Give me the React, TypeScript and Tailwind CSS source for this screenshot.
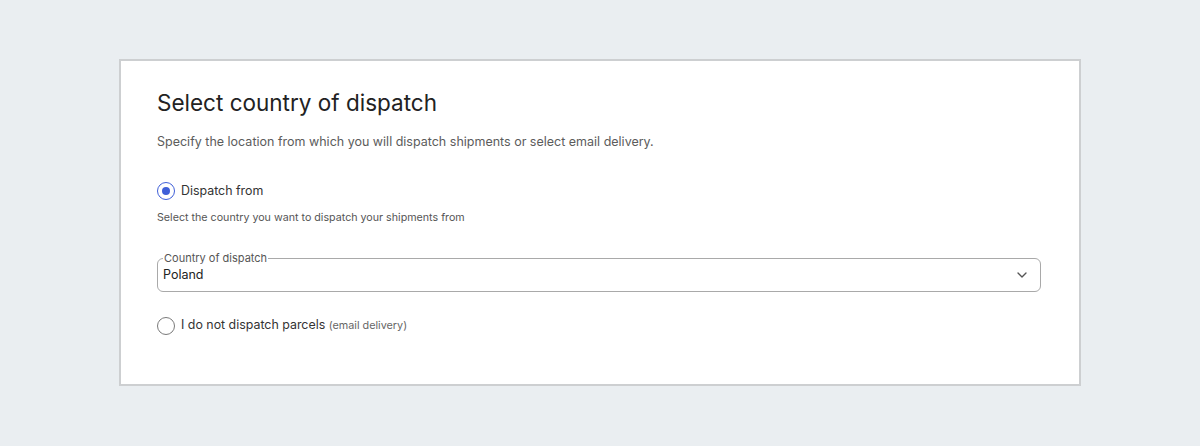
import React, { useState } from 'react';
import { ChevronDown } from 'lucide-react';

function Radio({ checked }: { checked: boolean }) {
  return (
    <span
      className={
        checked
          ? 'flex h-[18px] w-[18px] items-center justify-center rounded-full border-[1.5px] border-[#3f5fd8]'
          : 'flex h-[18px] w-[18px] items-center justify-center rounded-full border-[1.5px] border-[#7a7a7a]'
      }
    >
      {checked && <span className="h-[8px] w-[8px] rounded-full bg-[#3f5fd8]" />}
    </span>
  );
}

export default function App() {
  const [mode, setMode] = useState<'from' | 'email'>('from');

  return (
    <div
      className="min-h-[446px] w-full bg-[#eaeef1] pt-[59px]"
      style={{ fontFamily: 'Inter, "Noto Sans", sans-serif' }}
    >
      <div className="mx-auto w-[962px] border-2 border-[#cdcfd1] bg-white pt-[27px] pr-[38px] pb-[48px] pl-[36px]">
        <h2 className="text-[22.5px] leading-[30px] font-normal text-[#222]">Select country of dispatch</h2>
        <p className="mt-[14px] text-[12.5px] leading-[20px] text-[#5c5c5c]">
          Specify the location from which you will dispatch shipments or select email delivery.
        </p>

        <button
          onClick={() => setMode('from')}
          className="mt-[29px] flex items-center gap-[6px] text-[12.4px] leading-[20px] text-[#333]"
        >
          <Radio checked={mode === 'from'} />
          Dispatch from
        </button>
        <p className="mt-[9px] text-[10.7px] leading-[16px] text-[#555]">
          Select the country you want to dispatch your shipments from
        </p>

        <fieldset className="mt-[26px] rounded-[6px] border border-[#a9a9a9] pr-[10px] pb-[5px] pl-[5px]">
          <legend className="px-[1px] text-[11px] leading-[12px] text-[#555]">Country of dispatch</legend>
          <div className="flex h-[22px] items-center justify-between">
            <span className="text-[12.5px] leading-[20px] text-[#222]">Poland</span>
            <ChevronDown className="h-[16px] w-[16px] text-[#555]" strokeWidth={2} />
          </div>
        </fieldset>

        <button
          onClick={() => setMode('email')}
          className="mt-[23px] flex items-center gap-[6px] text-[12.4px] leading-[20px] text-[#333]"
        >
          <Radio checked={mode === 'email'} />
          <span>
            I do not dispatch parcels <span className="text-[10.8px] text-[#666]">(email delivery)</span>
          </span>
        </button>
      </div>
    </div>
  );
}
